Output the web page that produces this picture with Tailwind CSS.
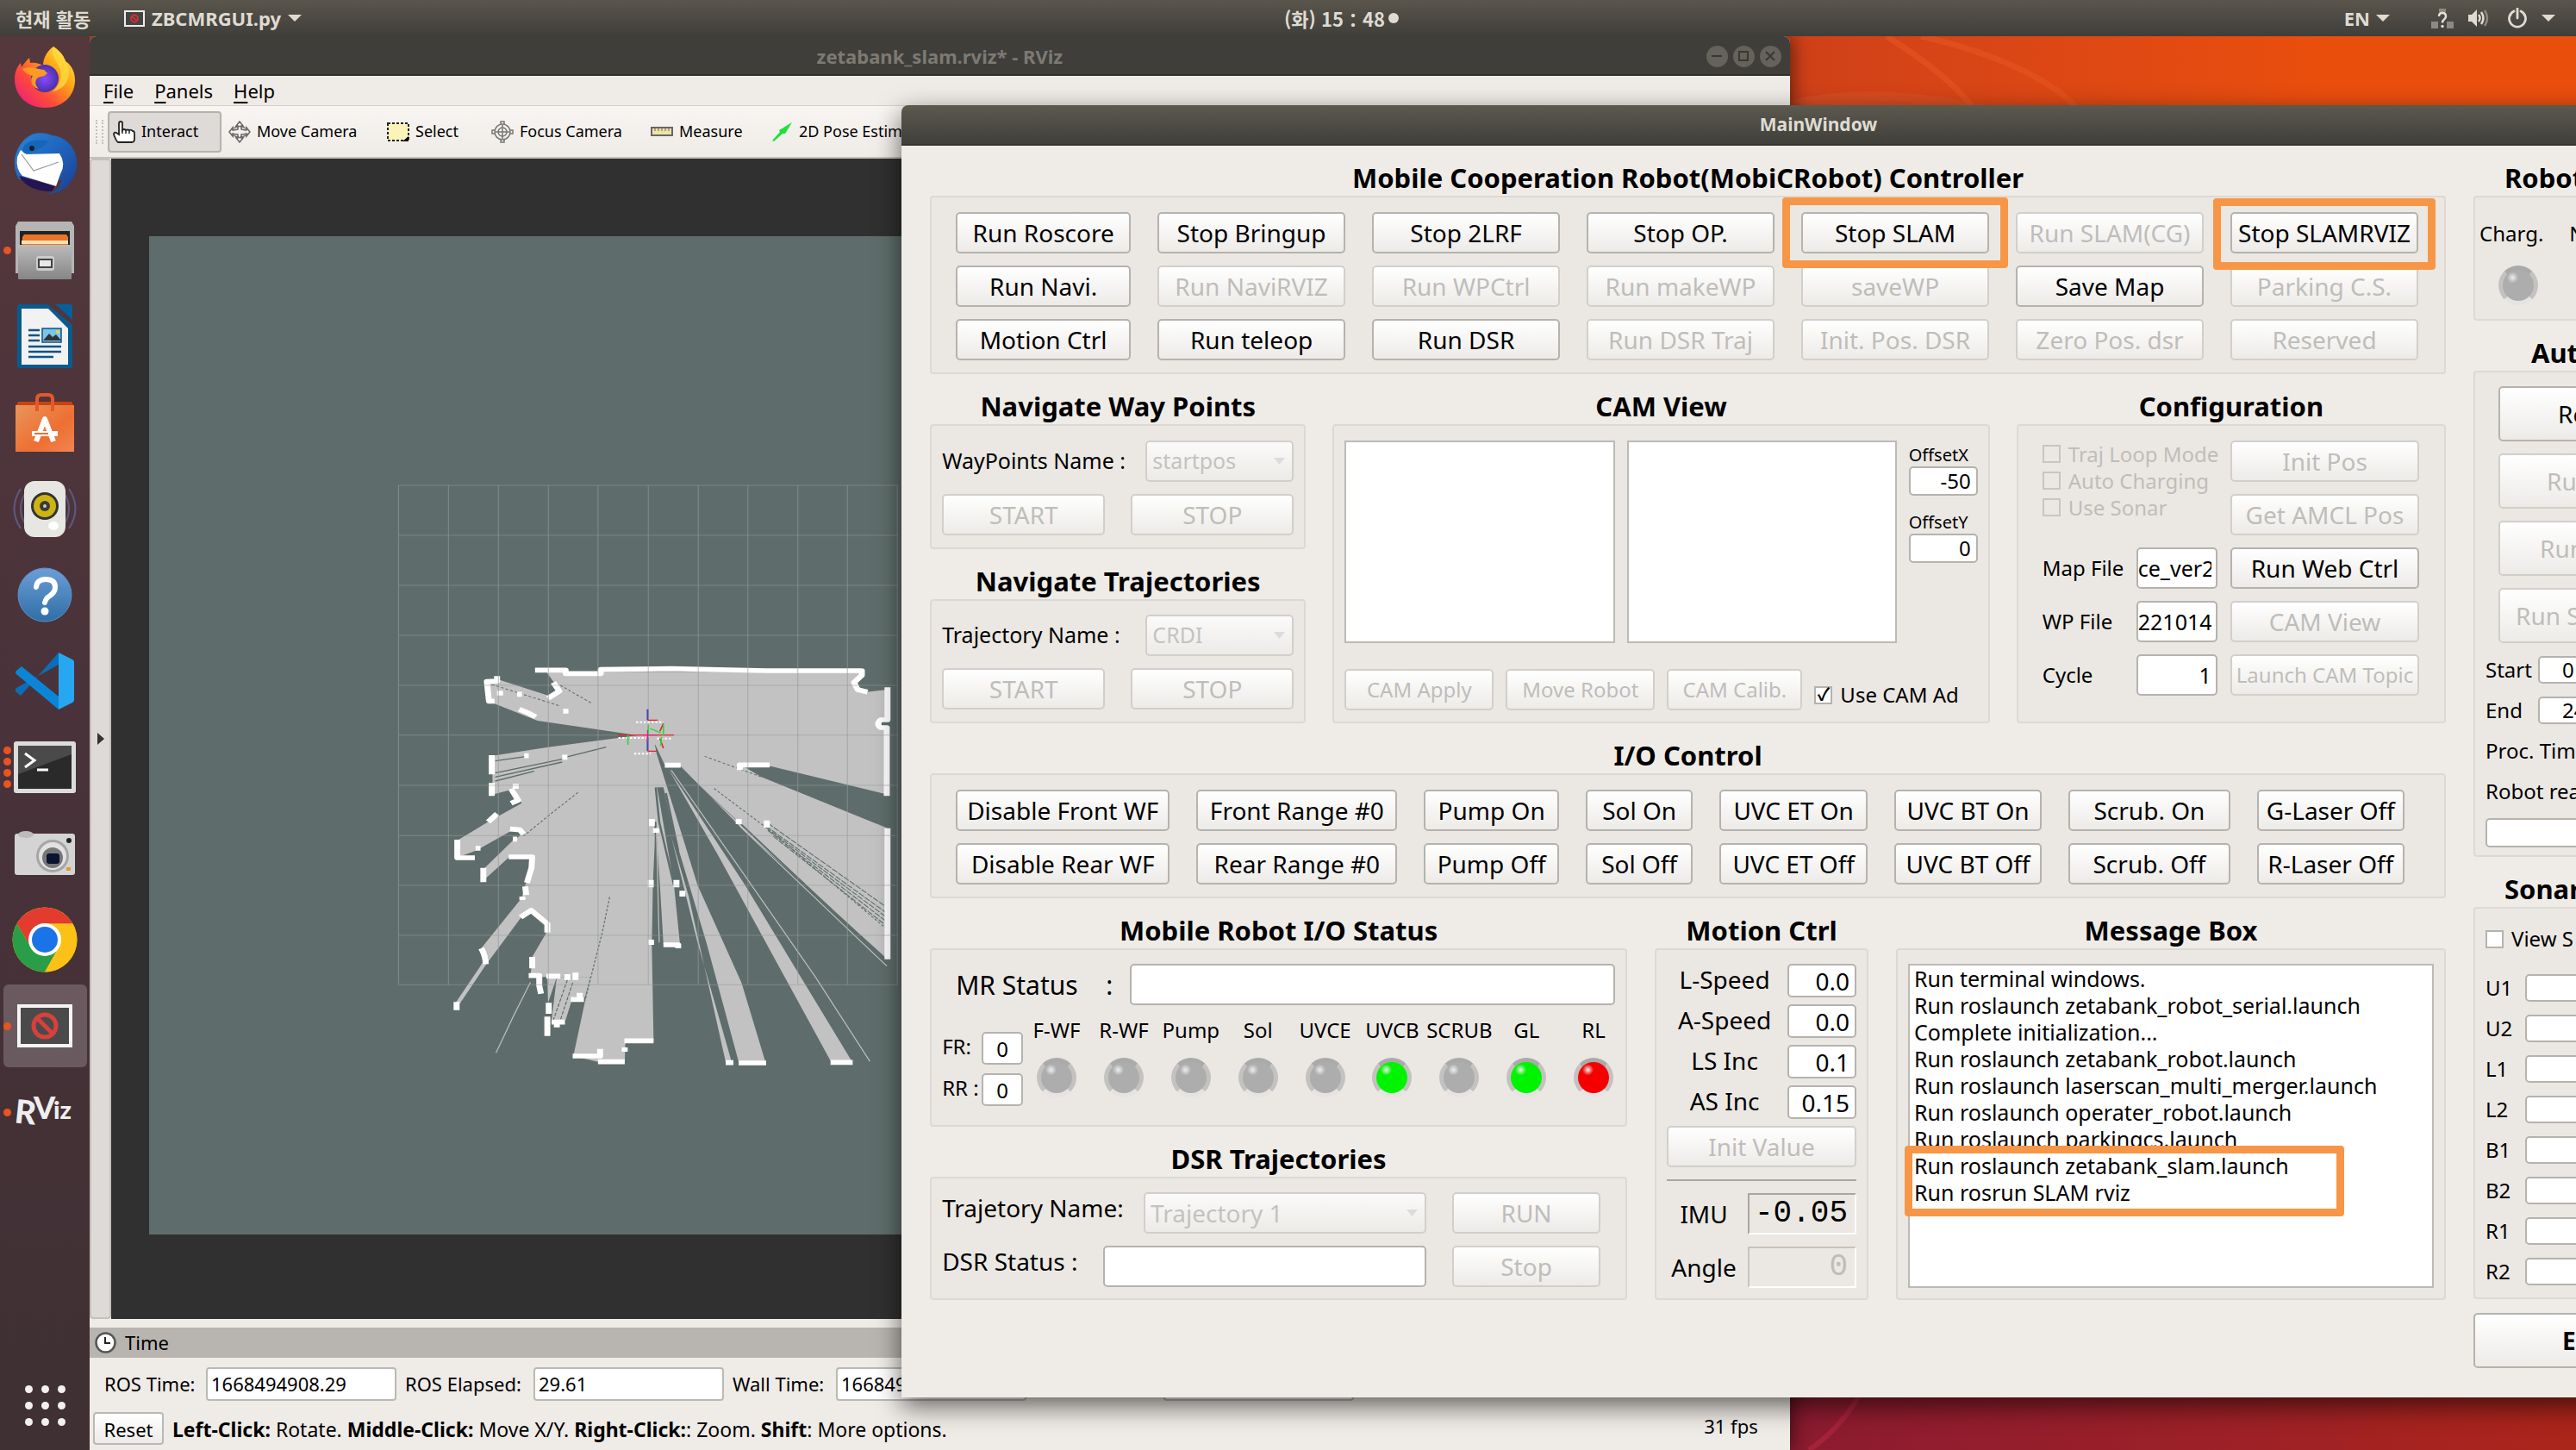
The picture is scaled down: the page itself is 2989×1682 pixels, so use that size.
<!DOCTYPE html>
<html lang="ko">
<head>
<meta charset="utf-8">
<title>ZBCMRGUI.py</title>
<script src="https://cdn.jsdelivr.net/npm/@tailwindcss/browser@4"></script>
</head>
<body class="relative h-screen overflow-hidden bg-[#8f1c2e] font-['Noto_Sans','Noto_Sans_CJK_KR',sans-serif] text-black">

<!-- Wallpaper -->
<div class="absolute inset-x-0 top-0 h-1/2 bg-linear-to-r from-[#c43a1c] from-60% to-[#e94e0d] to-90%"></div>
<div class="absolute inset-x-0 bottom-0 h-1/2 bg-linear-to-r from-[#8c1b30] from-70% to-[#ab251b]"></div>
<svg class="absolute right-0 top-[42px] h-20 w-[912px]" viewBox="0 0 912 80" fill="none" aria-hidden="true">
  <path d="M112 0C150 24 190 54 210 80M152 0C240 20 300 50 330 80" stroke="#e2521f" stroke-width="7" opacity=".7"/>
  <path d="M0 74Q100 52 228 80H0Z" fill="#d8532a" opacity=".5"/>
</svg>
<svg class="absolute bottom-0 right-0 h-[62px] w-[912px]" viewBox="0 0 912 62" fill="none" aria-hidden="true">
  <path d="M80 0Q55 40 22 62" stroke="#a5223b" stroke-width="6"/>
  <path d="M700 0Q660 40 640 62H912V0Z" fill="#b02a1a" opacity=".15"/>
</svg>

<!-- Top bar -->
<header class="absolute inset-x-0 top-0 z-30 flex h-[42px] items-center bg-linear-to-b from-[#5a564d] to-[#3f3e39] text-[22px] font-bold text-[#dfdbd2]">
  <nav class="flex items-center pl-[18px]">
    <a href="#" class="w-[126px] font-['Noto_Sans_CJK_KR',sans-serif]">현재 활동</a>
    <a href="#" class="flex items-center gap-[8px]">
      <svg class="h-[19px] w-6" viewBox="0 0 24 19" aria-hidden="true"><rect x="1" y="1" width="22" height="17" fill="#444" stroke="#eee" stroke-width="2"/><circle cx="12" cy="9.500" r="4" fill="none" stroke="#c33" stroke-width="2"/><path d="M9 7l6 5" stroke="#c33" stroke-width="2"/></svg>
      ZBCMRGUI.py
      <svg class="h-2 w-4" viewBox="0 0 16 8" aria-hidden="true"><path d="M0 0h16l-8 8z" fill="#dfdbd2"/></svg>
    </a>
  </nav>
  <div class="absolute inset-x-0 mx-auto flex w-[136px] items-center justify-center gap-1 whitespace-nowrap font-['Noto_Sans_CJK_KR',sans-serif] left-[124px]" ><time>(화) 15：48</time><span class="size-3 shrink-0 rounded-full bg-[#dfdbd2]"></span></div>
  <div class="ml-auto flex items-center pr-6">
    <span class="mr-[7px]">EN</span>
    <svg class="mr-12 h-2 w-4" viewBox="0 0 16 8" aria-hidden="true"><path d="M0 0h16l-8 8z" fill="#dfdbd2"/></svg>
    <svg class="mr-4 h-6 w-[26px]" viewBox="0 0 26 24" aria-hidden="true"><path d="M9 1h8v4H9zM0 16h8v8H0zM18 16h8v8h-8z" fill="#8b8980"/><path d="M9 10q0-4 4-4t4 4q0 2-2 3.500t-2 4" fill="none" stroke="#e5e1d8" stroke-width="2.500"/><circle cx="13" cy="21.500" r="1.700" fill="#e5e1d8"/></svg>
    <svg class="mr-5 h-6 w-[26px]" viewBox="0 0 26 24" fill="none" aria-hidden="true"><path d="M1 8h4l6-6v20l-6-6H1z" fill="#dfdbd2"/><path d="M13 8q3 4 0 8M16 5q5 7 0 14" stroke="#dfdbd2" stroke-width="2.500"/><path d="M20 3q6 9 0 18" stroke="#8b8980" stroke-width="2.500"/></svg>
    <svg class="mr-4 h-6 w-6" viewBox="0 0 24 24" fill="none" aria-hidden="true"><path d="M8 4a9.500 9.500 0 1 0 8 0M12 1v11" stroke="#dfdbd2" stroke-width="2.800" stroke-linecap="round"/></svg>
    <svg class="h-2 w-4" viewBox="0 0 16 8" aria-hidden="true"><path d="M0 0h16l-8 8z" fill="#dfdbd2"/></svg>
  </div>
</header>

<!-- Dock -->
<aside class="absolute bottom-0 left-0 top-[42px] z-20 flex w-[104px] flex-col items-center bg-linear-to-b from-[#55383c] via-[#49323a] to-[#3e3033]">
  <ul class="flex h-[1296px] flex-col justify-between [&>li]:relative [&>li]:flex [&>li]:h-24 [&>li]:w-[97px] [&>li]:items-center [&>li]:justify-center">
    <li><svg class="size-[74px]" viewBox="0 0 74 74"><defs><linearGradient id="ff" x1="1" y1="0" x2="0" y2="1"><stop offset="0" stop-color="#fff44f"/><stop offset=".35" stop-color="#ffa716"/><stop offset=".65" stop-color="#ff4a3a"/><stop offset="1" stop-color="#e3148c"/></linearGradient><radialGradient id="fp"><stop offset="0" stop-color="#8a4bff"/><stop offset="1" stop-color="#4b2fa8"/></radialGradient></defs><path d="M47 1c10 7 12 12 14 17 8 5 11 14 11 22 0 19-15 32-35 32S2 58 2 39c0-10 4-16 7-19l1 5c3-5 7-9 9-11l1 6c6-1 11 1 15 3 0-9 5-17 12-22z" fill="url(#ff)"/><circle cx="37" cy="38" r="16" fill="url(#fp)"/><path d="M11 27c9-4 15 0 25 1l4 4c-4 5-9 3-12 6-3 4-2 8 2 12-10-2-10-12-7-15-5-1-9-4-12-8z" fill="#ff9a20"/><path d="M47 1c-4 8 3 16 6 22 6 10 2 25-8 30 20-2 24-24 16-35C59 13 57 8 47 1z" fill="#ffd83d" opacity=".8"/></svg></li>
    <li><svg class="size-[76px]" viewBox="0 0 76 76"><defs><linearGradient id="tb" x1="0" y1="0" x2="1" y2="1"><stop offset="0" stop-color="#2a86d8"/><stop offset=".5" stop-color="#1f62bd"/><stop offset="1" stop-color="#1a3f8e"/></linearGradient></defs><path d="M18 7C28-1 42 3 46 5c20 2 30 18 29 34-1 20-16 34-34 34 12-4 16-10 16-16L8 56C-3 38 5 16 18 7z" fill="url(#tb)"/><path d="M6 30l4-8 7 5 38-1q8 12 1 24l-5 14-39-12q-8-8-6-22z" fill="#fff"/><path d="M11 27l14 19 29-10" fill="none" stroke="#999" stroke-width="1.200"/><path d="M14 17q10-10 29-5-10 11-28 14-5-2-1-9z" fill="#1666b8"/><circle cx="23" cy="20" r="3" fill="#123"/><path d="M8 52l42 12-4 6Q18 70 8 52z" fill="#241452"/></svg></li>
    <li><i class="absolute left-0 size-[9px] rounded-full bg-[#e95420]"></i><svg class="h-[70px] w-[68px]" viewBox="0 0 68 70"><defs><linearGradient id="fc" x1="0" y1="0" x2="0" y2="1"><stop offset="0" stop-color="#bbb"/><stop offset="1" stop-color="#868686"/></linearGradient></defs><path d="M3 2h62l3 5v55H0V7z" fill="#b5b5b5"/><rect x="5" y="13" width="58" height="20" fill="#222"/><path d="M8 20l2-3h49l2 3v14H7z" fill="#e9752b"/><path d="M7 24h54v4H7z" fill="#ffe0b0"/><rect x="3" y="29" width="62" height="40" rx="1" fill="url(#fc)"/><rect x="24" y="42" width="21" height="17" rx="3" fill="#ccc"/><rect x="27" y="46" width="15" height="9" fill="#e8e8e8" stroke="#444" stroke-width="2"/></svg></li>
    <li><svg class="h-[74px] w-[64px]" viewBox="0 0 64 74"><path d="M3 0h32l29 24v47q0 3-3 3H3q-3 0-3-3V3q0-3 3-3z" fill="#0a5a8e"/><path d="M44 0h17q3 0 3 3v15z" fill="#06609c"/><path d="M5 5h31l23 23v42H5z" fill="#f2f2f2"/><path d="M13 30h13M13 36h13M13 42h13M13 49h38M13 55h38M13 61h29" stroke="#0e5385" stroke-width="2.500"/><rect x="29" y="28" width="22" height="16" fill="#7cc3ea" stroke="#0e5385" stroke-width="1.500"/><path d="M30 42l7-8 4 4 4-3 6 7z" fill="#333"/><circle cx="47" cy="32" r="2" fill="#f2d24b"/></svg></li>
    <li><svg class="h-[70px] w-[68px]" viewBox="0 0 68 70"><defs><linearGradient id="sc" x1="0" y1="0" x2="1" y2="1"><stop offset="0" stop-color="#e8955a"/><stop offset=".6" stop-color="#ee6f33"/><stop offset="1" stop-color="#f28552"/></linearGradient></defs><path d="M3 11h62l3 6H0z" fill="#c8430f"/><rect y="15" width="68" height="54" fill="url(#sc)"/><path d="M25 22V8q0-5 5-5h8q5 0 5 5v14" fill="none" stroke="#e3592a" stroke-width="4"/><path d="M24 57l10-26 10 26M19 48h30" fill="none" stroke="#fff" stroke-width="6" stroke-linejoin="round"/><path d="M22 48h16" stroke="#ee6f33" stroke-width="2"/></svg></li>
    <li><svg class="h-[70px] w-[76px]" viewBox="0 0 76 70"><path d="M10 12Q-5 35 10 58M16 16Q4 35 16 54M66 12q15 23 0 46M60 16q12 19 0 38" fill="none" stroke="#5d5a80" stroke-width="2"/><rect x="14" y="3" width="48" height="65" rx="12" fill="#e6e6e2"/><circle cx="38" cy="32" r="16" fill="#333"/><circle cx="38" cy="32" r="13" fill="#cdb412"/><circle cx="38" cy="32" r="6" fill="#3a3a3a"/><circle cx="38" cy="32" r="2" fill="#ccc"/><ellipse cx="48" cy="55" rx="6" ry="5" fill="#fff"/></svg></li>
    <li><svg class="size-[64px]" viewBox="0 0 64 64"><defs><linearGradient id="hp" x1="0" y1="0" x2="0" y2="1"><stop offset="0" stop-color="#6d9ed6"/><stop offset="1" stop-color="#2f6ea6"/></linearGradient></defs><circle cx="32" cy="32" r="31" fill="url(#hp)" stroke="#5a90c8"/><path d="M22 23q1-9 11-9 11 0 11 9 0 6-6 10-5 3-6 8" fill="none" stroke="#fff" stroke-width="6" stroke-linecap="round"/><circle cx="32" cy="51" r="4.500" fill="#fff"/></svg></li>
    <li><svg class="h-[66px] w-[68px]" viewBox="0 0 68 66"><path d="M50 0L6 50l-6-5q-1-2 1-4L50 14z" fill="#0a6fb8"/><path d="M50 66L1 25q-2-2 0-4l6-5 43 35z" fill="#0b86d6"/><path d="M50 0l16 8q2 1 2 3v44q0 2-2 3l-16 8z" fill="#27a7f2"/></svg></li>
    <li><span class="absolute left-0 flex flex-col gap-1 [&>i]:size-[9px] [&>i]:rounded-full [&>i]:bg-[#e95420]"><i></i><i></i><i></i><i></i></span><svg class="h-[60px] w-[72px]" viewBox="0 0 72 60"><rect width="72" height="60" rx="3" fill="#dcdcdc"/><rect x="5" y="5" width="62" height="50" fill="#2a2a2a"/><path d="M5 5h62v10L5 38z" fill="#4a4a4a"/><path d="M13 14l11 8-11 8M27 33h13" fill="none" stroke="#fff" stroke-width="3"/></svg></li>
    <li><svg class="h-[52px] w-[70px]" viewBox="0 0 70 52"><rect y="3" width="70" height="48" rx="3" fill="#d4d4d4"/><ellipse cx="13" cy="4" rx="9" ry="4" fill="#bbb"/><circle cx="44" cy="29" r="19" fill="#a5a5a5"/><circle cx="44" cy="29" r="16" fill="#e2e2e2"/><circle cx="44" cy="31" r="12" fill="#777"/><rect x="37" y="26" width="15" height="12" rx="3" fill="#0a1430"/><circle cx="63" cy="11" r="3" fill="#222"/><rect x="60" y="42" width="5" height="4" fill="#e79a2b"/></svg></li>
    <li><svg class="size-[76px]" viewBox="0 0 76 76"><circle cx="38" cy="38" r="37.500" fill="#fbc116"/><path d="M5.500 19.500A37.500 37.500 0 0 1 70.500 19.500H38A18.500 18.500 0 0 0 22 47z" fill="#e33b2e"/><path d="M5.500 19.500A37.500 37.500 0 0 0 38 75.500L54 47 22 47z" fill="#2a9d48"/><path d="M38 19.500h32.500A37.500 37.500 0 0 1 38 75.500L54 47z" fill="#fbc116"/><circle cx="38" cy="38" r="19" fill="#fff"/><circle cx="38" cy="38" r="15" fill="#1a73e8"/></svg></li>
    <li class="rounded-md bg-white/20"><i class="absolute left-0 size-[9px] rounded-full bg-[#e95420]"></i><svg class="h-[50px] w-16" viewBox="0 0 64 50"><rect x="2" y="2" width="60" height="46" fill="#4a4a4a" stroke="#f4f4f4" stroke-width="4"/><circle cx="32" cy="25" r="13" fill="none" stroke="#d8403c" stroke-width="5"/><path d="M23 16l18 18" stroke="#d8403c" stroke-width="5"/></svg></li>
    <li><i class="absolute left-0 size-[9px] rounded-full bg-[#e95420]"></i><svg class="h-14 w-[76px] overflow-visible" viewBox="0 0 76 56" font-family="Lato, sans-serif" font-weight="900" fill="#eee"><text x="3" y="41" font-size="38" transform="rotate(6 10 30)">R</text><text x="25" y="36" font-size="36">V</text><text x="48" y="36" font-size="29">iz</text></svg></li>
  </ul>
  <button aria-label="앱" class="absolute bottom-7 grid grid-cols-3 gap-[10px] [&>i]:size-[9px] [&>i]:rounded-full [&>i]:bg-[#f2f0f0]"><i></i><i></i><i></i><i></i><i></i><i></i><i></i><i></i><i></i></button>
</aside>

<!-- RViz window -->
<section class="absolute bottom-0 left-[104px] top-[42px] flex w-[66%] flex-col rounded-t-lg bg-[#efebe7] shadow-[4px_0_20px_rgba(0,0,0,0.5)]">
  <div class="relative flex h-[46px] items-center justify-center rounded-t-lg border-b-2 border-[#302f2b] bg-[#3f3e3a] pt-[2px] text-[22px] font-bold text-[#7d7a73]">
    <h1>zetabank_slam.rviz* - RViz</h1>
    <div class="absolute right-[10px] flex gap-[6px] [&>button]:flex [&>button]:size-[25px] [&>button]:items-center [&>button]:justify-center [&>button]:rounded-full [&>button]:bg-[#65625b]">
      <button aria-label="Minimize"><svg class="size-3" viewBox="0 0 12 12"><path d="M0 6h12" stroke="#383733" stroke-width="2"/></svg></button>
      <button aria-label="Maximize"><svg class="size-3" viewBox="0 0 12 12"><path d="M1 1h10v10H1z" fill="none" stroke="#383733" stroke-width="2"/></svg></button>
      <button aria-label="Close"><svg class="size-3" viewBox="0 0 12 12"><path d="M1 1l10 10M11 1L1 11" stroke="#383733" stroke-width="2"/></svg></button>
    </div>
  </div>
  <nav class="flex h-[35px] items-center gap-6 border-b border-[#d3cfca] pl-4 text-[22px] [&_u]:underline-offset-4">
    <a href="#"><u>F</u>ile</a><a href="#"><u>P</u>anels</a><a href="#"><u>H</u>elp</a>
  </nav>
  <div class="flex h-[61px] items-center border-b-2 border-[#c4c0bb] bg-linear-to-b from-[#f8f5f2] to-[#efebe7] pl-[7px] text-[18px] [&>button]:flex [&>button]:items-center [&>button]:gap-[7px] [&_svg]:size-[26px]">
    <span class="mr-[5px] h-7 w-[9px] border-x-2 border-dotted border-[#c4c0bb]"></span>
    <button class="h-12 w-[132px] rounded border-2 border-[#b5b1ac] bg-[#dedad7] pl-1"><svg viewBox="0 0 26 26"><path d="M7 16V3q0-2 2-2t2 2v8q2-2 4 0 2-1 4 0 2-1 4 1 2 0 2 3v6q0 4-3 4H6q-2-1-5-9 0-3 3-2z" fill="#fff" stroke="#222" stroke-width="1.800"/><path d="M11 10v5M15 11v4M19 11v4" stroke="#222" stroke-width="1.500"/></svg>Interact</button>
    <button class="ml-2 w-[184px]"><svg viewBox="0 0 26 26" fill="none" stroke="#666" stroke-width="1.500"><path d="M13 1l4 5h-2v4q4 1 6 1V8l4 5-4 5v-3q-3 1-6 1v4h2l-4 5-4-5h2v-4q-3 0-6-1v3l-4-5 4-5v3q2 0 6-1V6H9zM6 9q7-5 14 0M6 17q7 5 14 0"/></svg>Move Camera</button>
    <button class="w-[121px]"><svg viewBox="0 0 26 26"><path d="M1 3h24v20H1z" fill="#fbf4b8" stroke="#222" stroke-width="2" stroke-dasharray="3 2"/><path d="M25 18v6h-7z"/></svg>Select</button>
    <button class="w-[185px]"><svg viewBox="0 0 26 26" fill="none" stroke="#777" stroke-width="1.500"><circle cx="13" cy="13" r="9"/><circle cx="13" cy="13" r="5"/><path d="M11 5V1h4v4M11 21v4h4v-4M5 11H1v4h4M21 11h4v4h-4M13 5v16M5 13h16"/></svg>Focus Camera</button>
    <button class="w-[139px]"><svg viewBox="0 0 26 26"><path d="M1 8h24v9H1z" fill="#efe3a5" stroke="#666" stroke-width="2"/><path d="M5 8v4M9 8v4M13 8v4M17 8v4M21 8v4" stroke="#666"/></svg>Measure</button>
    <button class="whitespace-nowrap"><svg viewBox="0 0 26 26"><path d="M2 23l9-10-1-2L25 2l-8 13-3 0-10 9z" fill="#1ee03a"/></svg>2D Pose Estimate</button>
  </div>
  <div class="flex min-h-0 flex-1">
    <div class="flex w-[25px] items-center justify-center rounded border-2 border-[#c4c0bb] bg-[#dedad7]"><svg class="h-[14px] w-2" viewBox="0 0 8 14"><path d="M0 0l8 7-8 7z" fill="#333"/></svg></div>
    <div class="relative flex-1 overflow-hidden bg-[#303030]">
      <div class="absolute bottom-[98px] left-11 right-10 top-[90px] bg-[#5e6d6b]"></div>
      <!-- Occupancy grid -->
      <svg class="absolute left-[311px] top-[376px] h-[700px] w-[640px]" viewBox="0 -540 1568 2100" preserveAspectRatio="none" fill="none" aria-label="Map">
        <g fill="#c2c2c2">
          <path d="M475 118H1370L1350 160 1385 188 1445 180V280L1415 300 1445 312V545L1115 447 1040 450 1085 483 1445 662V1118L1020 650 858 448 812 445 784 372 788 400 905 860 1030 1200 1098 1476H1022L930 1060 840 690 808 520 790 520 838 860 855 1066H808L798 860 786 640 778 860 775 1070 780 1402H700L698 1475H622L552 1455 585 1265 600 1180H505L480 1270 478 1180H430L435 1110 478 1020V990L435 950 402 975 305 1135 225 1280 218 1268 300 1120 290 1080 405 905 415 860 438 762H370L300 840V800L380 705 410 680 380 668 275 740 220 765 222 705 310 640 405 575 385 525 322 545V410L480 380 735 339 450 288 320 225 305 150 335 143 480 200 515 185Z"/>
          <path d="M822 455L1040 860 1345 1476H1285L965 760Z"/>
          <path d="M830 690L905 1060 1002 1476H985L880 900Z"/>
          <path d="M600 1180H505L490 1330H530L550 1250H585Z"/>
        </g>
        <g stroke="#5e6d6b" stroke-width="3">
          <path d="M330 470L520 422M330 484L520 432M330 428L420 412M520 418L645 380M330 498L440 464" stroke-width="4"/>
          <path d="M320 162L512 236M515 165L602 226M565 538L495 605 410 690M655 902L635 1020 585 1262M925 412L1085 483M952 524L1100 660 1440 1010" stroke-dasharray="8 6"/>
          <path d="M1105 645L1440 935M1100 655L1440 955M1105 670L1440 985M1120 690L1440 1000M1100 660L1440 970" stroke-dasharray="18 4"/>
          <path d="M858 455L1443 1120" stroke-width="2"/>
          <path d="M1030 650L1440 1125" stroke-width="5"/>
          <path d="M535 1190L495 1330M550 1200L515 1330" stroke-dasharray="12 5"/>
          <path d="M786 520L796 640 838 860M815 540L850 740M785 640L795 1060" stroke-width="6"/>
        </g>
        <path d="M784 372L812 445 855 448 1020 650" stroke="#5e6d6b" stroke-width="2"/>
        <path d="M830 460L990 740 1240 1180 1395 1474M430 1198L380 1320 332 1444M788 660L796 1060M1025 655L1443 1142" stroke="#c2c2c2" stroke-width="3"/>
        <g stroke="#fff" stroke-width="17" stroke-linejoin="round">
          <path d="M443 112H530V124H630V110L830 107 1100 114H1372V130L1350 155 1360 180 1388 188"/>
          <path d="M1445 172V285H1425Q1412 300 1425 312H1443V550M1445 662V1118"/>
          <path d="M495 155L512 185 480 210M335 133V150L306 152 312 220H328M398 248L425 262 445 275M335 192h17M392 196h14M523 255h15M412 410h13M520 415h15"/>
          <path d="M320 408V475M320 505V550M388 508V525M375 525L395 565 375 575M372 665L400 668 410 683M392 700h-12M222 702V765H272M368 762H435L433 800 420 852M296 800V850M415 865L418 895M407 900v12M402 972L432 948 478 995V1025"/>
          <path d="M290 1080Q302 1105 303 1135M220 1267V1295M435 1110V1150M425 1175H455V1210L460 1238M475 1177H515M535 1170V1190M558 1165V1190M545 1258H582M570 1235V1260M482 1270V1308M478 1318V1385M490 1337H528M505 1340V1355M335 612L310 640M288 732h-14"/>
          <path d="M550 1455H628V1430M622 1475H698M698 1440V1425M697 1402H780M985 1478H1007M1022 1479H1100M1283 1477H1346M808 1068H850V1080M773 1050V1068M775 630V655M787 662V678M772 842V868M845 842V868M862 880V900M812 443H857M1110 442H1025V460M1022 630V648M1102 635V660"/>
        </g>
        <g stroke="#969b9a" stroke-opacity=".55" stroke-width="3">
          <path d="M55-531V1207M197-531V1207M339-531V1207M481-531V1207M622-531V1207M765-531V1207M907-531V1207M1048-531V1207M1190-531V1207M1331-531V1207M1473-531V1207"/>
          <path d="M55-531H1473M55-357H1473M55-183H1473M55-9H1473M55 165H1473M55 338H1473M55 513H1473M55 688H1473M55 861H1473M55 1035H1473M55 1207H1473"/>
        </g>
        <path d="M730 293H808M725 403H772M680 348H760M790 350H830" stroke="#fff" stroke-width="6" stroke-dasharray="6 5"/>
        <path d="M763 248V286M763 345V393" stroke="#4a49b0" stroke-width="5"/>
        <path d="M763 286H792M763 394H790M678 338H838M808 298L798 325M798 350L808 384" stroke="#f0202a" stroke-width="4"/>
        <path d="M707 338V372M765 303V335M808 300V340M770 315L800 330M803 345L800 375" stroke="#2bd83a" stroke-width="4"/>
        <path d="M763 320V360M750 338H790" stroke="#e0208a" stroke-width="3"/>
      </svg>
    </div>
    <div class="w-6 border-2 border-[#c4c0bb] bg-[#dedad7]"></div>
  </div>
  <div class="mt-[10px] flex h-[35px] shrink-0 items-center gap-[10px] bg-[#b8b4b0] pl-[6px] text-[22px]">
    <svg class="size-[25px]" viewBox="0 0 25 25" fill="none"><circle cx="12.500" cy="12.500" r="11" fill="#fff" stroke="#555" stroke-width="2.500"/><path d="M12 6v7h6" stroke="#222" stroke-width="2"/></svg>
    <h2>Time</h2>
  </div>
  <div class="flex h-[60px] shrink-0 items-center pl-[17px] text-[22px] [&_input]:h-[39px] [&_input]:w-[221px] [&_input]:rounded [&_input]:border-2 [&_input]:border-[#bcb8b3] [&_input]:bg-white [&_input]:px-1 [&_label]:whitespace-nowrap">
    <label for="rt" class="w-[118px]">ROS Time:</label><input id="rt" value="1668494908.29">
    <label for="re" class="ml-[10px] w-[149px]">ROS Elapsed:</label><input id="re" value="29.61">
    <label for="wt" class="ml-[10px] w-[120px]">Wall Time:</label><input id="wt" value="1668494908.33">
    <label for="we" class="ml-[10px] w-[149px]">Wall Elapsed:</label><input id="we" value="29.59">
  </div>
  <div class="flex h-[47px] shrink-0 items-center pb-1 pl-1 pr-[37px] text-[22px]">
    <button class="mr-[10px] h-[38px] w-[82px] rounded border-2 border-[#bcb8b3] bg-linear-to-b from-white to-[#edebe9] pt-[2px]">Reset</button>
    <p class="pt-1 text-[23px]"><b>Left-Click:</b> Rotate. <b>Middle-Click:</b> Move X/Y. <b>Right-Click:</b>: Zoom. <b>Shift</b>: More options.</p>
    <span class="ml-auto pb-1">31 fps</span>
  </div>
</section>

<!-- MainWindow -->
<main class="absolute -right-[185px] bottom-[61px] left-[35%] top-[122px] z-10 flex flex-col rounded-t-lg bg-[#efece7] shadow-[0_10px_30px_rgba(0,0,0,0.6)]
  [&_button]:h-12 [&_button]:whitespace-nowrap [&_button]:rounded-[5px] [&_button]:border-2 [&_button]:border-[#b6b2ae] [&_button]:bg-linear-to-b [&_button]:from-white [&_button]:to-[#edebe8] [&_button]:text-[28px] [&_button]:leading-none
  [&_button:disabled]:border-[#d2cfcb] [&_button:disabled]:text-[#bfbdba]
  [&_select]:h-12 [&_select]:w-full [&_select]:appearance-none [&_select]:rounded-[5px] [&_select]:border-2 [&_select]:border-[#d2cfcb] [&_select]:bg-linear-to-b [&_select]:from-[#fbfafa] [&_select]:to-[#edebe8] [&_select]:px-[6px] [&_select]:text-[#c4c2bf] [&_select]:opacity-100
  [&_input]:rounded-[5px] [&_input]:border-2 [&_input]:border-[#b6b2ae] [&_input]:bg-white
  [&_input[type=checkbox]]:size-[21px] [&_input[type=checkbox]]:shrink-0 [&_input[type=checkbox]]:appearance-none [&_input[type=checkbox]]:rounded-none
  [&_h2]:h-[58px] [&_h2]:whitespace-nowrap [&_h2]:pt-[18px] [&_h2]:text-center [&_h2]:text-[31px] [&_h2]:font-bold [&_h2]:leading-[38px]">
  <div class="flex h-[47px] shrink-0 items-center justify-center rounded-t-lg border-b-2 border-[#35342f] bg-linear-to-b from-[#5c594f] to-[#403f3a] text-[21px] font-bold text-[#dfdbd2]"><h1>MainWindow</h1></div>
  <div class="flex gap-8 px-[33px]">

    <div class="min-w-0 flex-1">
      <section>
        <h2>Mobile Cooperation Robot(MobiCRobot) Controller</h2>
        <div class="grid h-[207px] grid-cols-[203fr_218fr_218fr_218fr_218fr_218fr_218fr] content-start gap-x-[31px] gap-y-[14px] rounded border-2 border-[#dcd9d5] bg-[#ebe8e3] pl-7 pr-[30px] pt-[17px] [&_button]:w-full">
          <button>Run Roscore</button><button>Stop Bringup</button><button>Stop 2LRF</button><button>Stop OP.</button>
          <div class="relative"><button>Stop SLAM</button><span class="pointer-events-none absolute -inset-x-[22px] -inset-y-[17px] rounded border-[9px] border-[#f79646]"></span></div>
          <button disabled>Run SLAM(CG)</button>
          <div class="relative"><button>Stop SLAMRVIZ</button><span class="pointer-events-none absolute -inset-x-5 -bottom-[19px] -top-4 rounded border-[9px] border-[#f79646]"></span></div>
          <button>Run Navi.</button><button disabled>Run NaviRVIZ</button><button disabled>Run WPCtrl</button><button disabled>Run makeWP</button><button disabled>saveWP</button><button>Save Map</button><button disabled>Parking C.S.</button>
          <button>Motion Ctrl</button><button>Run teleop</button><button>Run DSR</button><button disabled>Run DSR Traj</button><button disabled>Init. Pos. DSR</button><button disabled>Zero Pos. dsr</button><button disabled>Reserved</button>
        </div>
      </section>

      <div class="grid grid-cols-[436fr_762fr_498fr] gap-x-[31px] text-[25px]">
        <div>
          <section>
            <h2>Navigate Way Points</h2>
            <div class="h-[145px] rounded border-2 border-[#dcd9d5] bg-[#ebe8e3] px-3 pt-[17px]">
              <div class="flex items-center justify-between"><label for="wp">WayPoints Name :</label><span class="relative w-[172px]"><select id="wp" disabled><option>startpos</option></select><svg class="absolute right-[10px] top-5 h-2 w-[13px]" viewBox="0 0 13 8"><path d="M0 0h13l-6.500 8z" fill="#dedbd8"/></svg></span></div>
              <div class="mt-[14px] grid grid-cols-2 gap-[30px]"><button disabled>START</button><button disabled>STOP</button></div>
            </div>
          </section>
          <section>
            <h2>Navigate Trajectories</h2>
            <div class="h-[144px] rounded border-2 border-[#dcd9d5] bg-[#ebe8e3] px-3 pt-4">
              <div class="flex items-center justify-between"><label for="tj">Trajectory Name :</label><span class="relative w-[172px]"><select id="tj" disabled><option>CRDI</option></select><svg class="absolute right-[10px] top-5 h-2 w-[13px]" viewBox="0 0 13 8"><path d="M0 0h13l-6.500 8z" fill="#dedbd8"/></svg></span></div>
              <div class="mt-[14px] grid grid-cols-2 gap-[30px]"><button disabled>START</button><button disabled>STOP</button></div>
            </div>
          </section>
        </div>

        <section>
          <h2>CAM View</h2>
          <div class="h-[347px] rounded border-2 border-[#dcd9d5] bg-[#ebe8e3] px-3 pt-[17px]">
            <div class="flex gap-[14px]">
              <div class="h-[235px] flex-1 border-2 border-[#bdbab6] bg-white"></div>
              <div class="h-[235px] flex-1 border-2 border-[#bdbab6] bg-white"></div>
              <div class="w-20 text-[20px] [&_input]:mb-[14px] [&_input]:block [&_input]:h-[34px] [&_input]:w-full [&_input]:px-[6px] [&_input]:text-right [&_input]:text-[24px] [&_label]:block [&_label]:h-[30px] [&_label]:leading-[34px]">
                <label for="ox">OffsetX</label><input id="ox" value="-50">
                <label for="oy">OffsetY</label><input id="oy" value="0">
              </div>
            </div>
            <div class="mt-[30px] flex gap-[14px]">
              <button disabled class="w-[173px] text-[24px]!">CAM Apply</button><button disabled class="w-[173px] text-[24px]!">Move Robot</button><button disabled class="w-[157px] text-[24px]!">CAM Calib.</button>
              <label class="flex items-center gap-[9px] pt-3 text-[24px]"><input type="checkbox" checked class="flex items-center justify-center text-[20px] font-bold leading-none checked:before:content-['✓']">Use CAM Ad</label>
            </div>
          </div>
        </section>

        <section>
          <h2>Configuration</h2>
          <div class="flex h-[347px] justify-between rounded border-2 border-[#dcd9d5] bg-[#ebe8e3] pl-7 pr-[29px] pt-[17px]">
            <div class="w-[203px] text-[24px]">
              <div class="mb-[19px] text-[#bfbdba] [&_input]:border-[#c9c6c2]! [&_input]:bg-transparent! [&_label]:flex [&_label]:h-[31px] [&_label]:items-center [&_label]:gap-[9px] [&_label]:whitespace-nowrap">
                <label><input type="checkbox" disabled>Traj Loop Mode</label>
                <label><input type="checkbox" disabled>Auto Charging</label>
                <label><input type="checkbox" disabled>Use Sonar</label>
              </div>
              <div class="mt-[31px] flex flex-col gap-[14px] [&>div]:flex [&>div]:h-12 [&>div]:items-center [&>div]:justify-between [&_input]:h-12 [&_input]:w-[94px] [&_input]:pr-[5px] [&_input]:text-right [&_input]:text-[25px]">
                <div><label for="mf">Map File</label><input id="mf" value="ce_ver2"></div>
                <div><label for="wf">WP File</label><input id="wf" value="221014"></div>
                <div><label for="cy">Cycle</label><input id="cy" value="1"></div>
              </div>
            </div>
            <div class="flex w-[219px] flex-col gap-[14px]">
              <button disabled>Init Pos</button><button disabled>Get AMCL Pos</button><button>Run Web Ctrl</button><button disabled>CAM View</button><button disabled class="text-[24px]!">Launch CAM Topic</button>
            </div>
          </div>
        </section>
      </div>

      <section>
        <h2>I/O Control</h2>
        <div class="grid h-[145px] grid-cols-[249fr_234fr_157fr_125fr_172fr_172fr_188fr_172fr] content-start gap-x-[31px] gap-y-[14px] rounded border-2 border-[#dcd9d5] bg-[#ebe8e3] pl-7 pr-[46px] pt-[17px]">
          <button>Disable Front WF</button><button>Front Range #0</button><button>Pump On</button><button>Sol On</button><button>UVC ET On</button><button>UVC BT On</button><button>Scrub. On</button><button>G-Laser Off</button>
          <button>Disable Rear WF</button><button>Rear Range #0</button><button>Pump Off</button><button>Sol Off</button><button>UVC ET Off</button><button>UVC BT Off</button><button>Scrub. Off</button><button>R-Laser Off</button>
        </div>
      </section>

      <div class="grid grid-cols-[809fr_248fr_638fr] gap-x-8">
        <div>
          <section>
            <h2>Mobile Robot I/O Status</h2>
            <div class="h-[207px] rounded border-2 border-[#dcd9d5] bg-[#ebe8e3] px-3 pt-4">
              <div class="flex items-center pl-4 text-[30px]"><label for="mr" class="w-[174px]">MR Status</label><span class="w-7">:</span><input id="mr" class="h-12 min-w-0 flex-1"></div>
              <div class="-mr-[14px] flex text-[24px]">
                <div class="w-[94px] pt-[30px] [&>div]:mb-2 [&>div]:flex [&>div]:items-center [&>div]:justify-between [&_input]:h-[38px] [&_input]:w-12 [&_input]:text-center [&_label]:pb-1">
                  <div><label for="fr">FR:</label><input id="fr" value="0"></div>
                  <div><label for="rr">RR :</label><input id="rr" value="0"></div>
                </div>
                <div class="grid flex-1 grid-cols-9 pt-3 [&>div]:flex [&>div]:flex-col [&>div]:items-center [&>div]:gap-[15px] [&>div]:leading-[34px] [&_i]:size-[46px] [&_i]:rounded-full [&_i]:border-[5px] [&_i]:border-t-[#aaa] [&_i]:border-x-[#c4c2c0] [&_i]:border-b-[#e6e4e2] [&_i]:bg-[radial-gradient(circle_at_32%_25%,#eee_0,transparent_18%)] [&_i]:bg-[#adadad]">
                  <div>F-WF<i></i></div><div>R-WF<i></i></div><div>Pump<i></i></div><div>Sol<i></i></div><div>UVCE<i></i></div><div>UVCB<i class="bg-[#00f400]!"></i></div><div>SCRUB<i></i></div><div>GL<i class="bg-[#00f400]!"></i></div><div>RL<i class="bg-[#f40000]!"></i></div>
                </div>
              </div>
            </div>
          </section>
          <section>
            <h2>DSR Trajectories</h2>
            <div class="grid h-[143px] grid-cols-[1fr_172px] content-start gap-x-[30px] gap-y-[14px] rounded border-2 border-[#dcd9d5] bg-[#ebe8e3] pl-3 pr-[29px] pt-4 text-[28px]">
              <div class="flex justify-between"><label for="dt" class="leading-[37px]">Trajetory Name:</label><span class="relative w-[328px]"><select id="dt" disabled><option>Trajectory 1</option></select><svg class="absolute right-[10px] top-5 h-2 w-[13px]" viewBox="0 0 13 8"><path d="M0 0h13l-6.500 8z" fill="#dedbd8"/></svg></span></div>
              <button disabled>RUN</button>
              <div class="flex justify-between"><label for="ds" class="leading-[37px]">DSR Status :</label><input id="ds" class="h-12 w-[375px]"></div>
              <button disabled>Stop</button>
            </div>
          </section>
        </div>

        <section>
          <h2>Motion Ctrl</h2>
          <div class="flex h-[408px] flex-col gap-2 rounded border-2 border-[#dcd9d5] bg-[#ebe8e3] px-3 pt-4 text-[28px] [&_input]:h-[39px] [&_input]:w-20 [&_input]:px-[6px] [&_input]:text-right [&>div]:flex [&>div]:items-center [&>div]:justify-between">
            <div><label for="ls" class="w-[134px] pb-1 text-center leading-[34px]">L-Speed</label><input id="ls" value="0.0"></div>
            <div><label for="as" class="w-[134px] pb-1 text-center leading-[34px]">A-Speed</label><input id="as" value="0.0"></div>
            <div><label for="li" class="w-[134px] pb-1 text-center leading-[34px]">LS Inc</label><input id="li" value="0.1"></div>
            <div><label for="ai" class="w-[134px] pb-1 text-center leading-[34px]">AS Inc</label><input id="ai" value="0.15"></div>
            <button disabled>Init Value</button>
            <hr class="my-[6px] border-t-2 border-[#a9a6a2]">
            <div><label for="imu" class="flex-1 pr-2 text-center">IMU</label><output id="imu" class="h-12 w-[126px] border-2 border-b-white border-l-[#a9a6a2] border-r-white border-t-[#a9a6a2] pr-2 text-right font-['Liberation_Mono',monospace] text-[36px] leading-[44px]">-0.05</output></div>
            <div class="mt-[6px]"><label for="ang" class="flex-1 pr-2 text-center">Angle</label><output id="ang" class="h-12 w-[126px] border-2 border-b-white border-l-[#c9c2bc] border-r-white border-t-[#c9c2bc] pr-2 text-right font-['Liberation_Mono',monospace] text-[36px] leading-[44px] text-[#bfbdba]">0</output></div>
          </div>
        </section>

        <section>
          <h2>Message Box</h2>
          <div class="relative h-[408px] rounded border-2 border-[#dcd9d5] bg-[#ebe8e3] px-3 pt-4">
            <textarea aria-label="Message Box" class="block h-[376px] w-full resize-none overflow-hidden border-2 border-[#bdbab6] bg-white px-[5px] text-[25px] leading-[31px]">Run terminal windows.
Run roslaunch zetabank_robot_serial.launch
Complete initialization...
Run roslaunch zetabank_robot.launch
Run roslaunch laserscan_multi_merger.launch
Run roslaunch operater_robot.launch
Run roslaunch parkingcs.launch
Run roslaunch zetabank_slam.launch
Run rosrun SLAM rviz</textarea>
            <span class="pointer-events-none absolute left-2 top-[227px] h-[82px] w-[510px] rounded border-[9px] border-[#f79646]"></span>
          </div>
        </section>
      </div>
    </div>

    <!-- Right column, runs off the screen edge -->
    <div class="w-[271px] shrink-0 text-[24px]">
      <section>
        <h2 class="text-left! pl-9">Robot</h2>
        <div class="h-[145px] rounded border-2 border-[#dcd9d5] bg-[#ebe8e3] px-[5px] pt-[25px]">
          <div class="flex gap-[30px] leading-[34px]"><span>Charg.</span><span>N</span></div>
          <i class="ml-[22px] mt-5 block size-[46px] rounded-full border-[5px] border-x-[#c4c2c0] border-b-[#e6e4e2] border-t-[#aaa] bg-[#adadad] bg-[radial-gradient(circle_at_32%_25%,#eee_0,transparent_18%)]"></i>
        </div>
      </section>
      <section>
        <h2 class="text-left! pl-[67px]">Auto</h2>
        <div class="flex h-[564px] flex-col gap-[15px] rounded border-2 border-[#dcd9d5] bg-[#ebe8e3] px-3 pt-4 [&_label]:leading-8">
          <div class="flex flex-col gap-[14px] px-[15px] [&>button]:h-16 [&>button]:text-left">
            <button class="pl-[67px]">Re</button><button disabled class="pl-[54px]">Ru</button><button disabled class="pl-[46px]">Run</button><button disabled class="pl-[18px]">Run S</button>
          </div>
          <div class="flex h-8 items-center [&>input]:h-8 [&>input]:w-[100px] [&>input]:pl-[26px] [&>label]:w-[61px]"><label for="st">Start</label><input id="st" value="0"></div>
          <div class="flex h-8 items-center [&>input]:h-8 [&>input]:w-[100px] [&>input]:pl-[26px] [&>label]:w-[61px]"><label for="en">End</label><input id="en" value="24"></div>
          <p class="leading-8">Proc. Time</p>
          <p class="leading-8">Robot ready</p>
          <input aria-label="Robot ready" class="h-[34px]">
        </div>
      </section>
      <section>
        <h2 class="text-left! pl-9">Sonar</h2>
        <div class="flex h-[455px] flex-col gap-[15px] rounded border-2 border-[#dcd9d5] bg-[#ebe8e3] px-3 pt-4 [&>div]:flex [&>div]:h-8 [&>div]:items-center [&>div>input]:h-8 [&>div>input]:min-w-0 [&>div>input]:flex-1 [&>div>label]:w-[46px] [&>div>label]:shrink-0">
          <label class="mb-[7px] flex h-[38px] items-center gap-[9px]"><input type="checkbox">View S</label>
          <div><label for="u1">U1</label><input id="u1"></div>
          <div><label for="u2">U2</label><input id="u2"></div>
          <div><label for="l1">L1</label><input id="l1"></div>
          <div><label for="l2">L2</label><input id="l2"></div>
          <div><label for="b1">B1</label><input id="b1"></div>
          <div><label for="b2">B2</label><input id="b2"></div>
          <div><label for="r1">R1</label><input id="r1"></div>
          <div><label for="r2">R2</label><input id="r2"></div>
        </div>
      </section>
      <button class="mt-4 h-16! w-full pl-[101px] text-left font-bold">E</button>
    </div>
  </div>
</main>
</body>
</html>
